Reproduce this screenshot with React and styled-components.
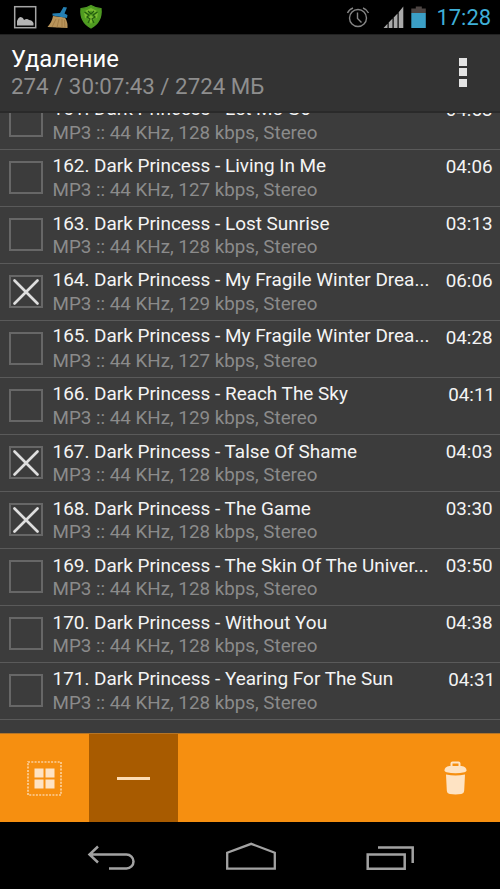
import React from 'react';
import styled, { createGlobalStyle } from 'styled-components';

const GlobalStyle = createGlobalStyle`
    * {
        box-sizing: border-box;
    }
    body {
        margin: 0;
        background: #000;
        font-family: Roboto, "Liberation Sans", sans-serif;
    }
`;

const Screen = styled.div`
    display: flex;
    flex-direction: column;
    width: 500px;
    height: 889px;
    overflow: hidden;
    background: #3c3c3c;
`;
const StatusBar = styled.div`
    display: flex;
    justify-content: space-between;
    flex: none;
    height: 34px;
    padding: 0 9px 0 13px;
    background: #000;
`;
const StatusGroup = styled.div`
    display: flex;
    align-items: flex-start;
`;
const Clock = styled.span`
    margin-left: 10px;
    color: #3fb0d8;
    font-size: 21.9px;
    line-height: 36px;
`;
const Header = styled.header`
    display: flex;
    justify-content: space-between;
    flex: none;
    height: 79px;
    padding: 10px 33px 0 11px;
    border-top: 1px solid #222;
    border-bottom: 2px solid #2a2a2a;
    background: #333;
`;
const HeaderTitle = styled.div`
    color: #fff;
    font-size: 23.8px;
    line-height: 28px;
`;
const HeaderInfo = styled.div`
    color: #8e8e8e;
    font-size: 22.3px;
    line-height: 27px;
`;
const MenuButton = styled.div`
    display: grid;
    gap: 2.5px;
    align-content: start;
    padding-top: 12.5px;
`;
const MenuDot = styled.span`
    width: 8px;
    height: 8px;
    background: #e3e3e3;
`;
const List = styled.div`
    display: flex;
    flex-direction: column;
    justify-content: flex-end;
    flex: 1;
    min-height: 0;
    padding-bottom: 13px;
    overflow: hidden;
`;
const Row = styled.div`
    display: grid;
    grid-template-columns: 34px 380px 1fr;
    column-gap: 9.5px;
    flex: none;
    height: 57px;
    padding: 4px 7.5px 0 9px;
    border-bottom: 1px solid #5a5a5a;
`;
const CheckBox = styled.span`
    display: flex;
    align-items: center;
    justify-content: center;
    height: 33px;
    margin-top: 7px;
    border: 2px solid #676767;
`;
const TrackTitle = styled.div`
    margin: ${props => props.$shift}px 0 ${props => -props.$shift}px;
    color: #f4f4f4;
    font-size: 18.93px;
    line-height: 24px;
    white-space: nowrap;
`;
const TrackInfo = styled.div`
    color: #8b8b8b;
    font-size: 18.8px;
    line-height: 24px;
    white-space: nowrap;
`;
const Duration = styled.div`
    margin-right: ${props => (props.$tight ? '-2.5px' : 0)};
    color: #f4f4f4;
    font-size: 18.8px;
    line-height: 26px;
    text-align: right;
`;
const Toolbar = styled.div`
    display: flex;
    flex: none;
    height: 89px;
    border-top: 1px solid #b47528;
    background: #f68f10;
`;
const ToolButton = styled.div`
    display: flex;
    align-items: center;
    justify-content: center;
    width: 89px;
    margin-left: ${props => (props.$last ? 'auto' : 0)};
    background: ${props => (props.$active ? '#a85b00' : 'transparent')};
`;
const Minus = styled.span`
    width: 33px;
    height: 3px;
    background: #fddcb4;
`;
const NavBar = styled.nav`
    display: flex;
    justify-content: space-between;
    flex: none;
    height: 67px;
    padding: 20px 83px 0 85px;
    background: #000;
`;

const tracks = [
    { title: '161. Dark Princess - Let Me Go', rate: 128, time: '04:53', shift: 0 },
    { title: '162. Dark Princess - Living In Me', rate: 127, time: '04:06', shift: 0 },
    { title: '163. Dark Princess - Lost Sunrise', rate: 128, time: '03:13', shift: 1 },
    { title: '164. Dark Princess - My Fragile Winter Drea...', rate: 129, time: '06:06', shift: 0, checked: true },
    { title: '165. Dark Princess - My Fragile Winter Drea...', rate: 127, time: '04:28', shift: -1 },
    { title: '166. Dark Princess - Reach The Sky', rate: 129, time: '04:11', shift: 0 },
    { title: '167. Dark Princess - Talse Of Shame', rate: 128, time: '04:03', shift: 1, checked: true },
    { title: '168. Dark Princess - The Game', rate: 128, time: '03:30', shift: 1, checked: true },
    { title: '169. Dark Princess - The Skin Of The Univer...', rate: 128, time: '03:50', shift: 1 },
    { title: '170. Dark Princess - Without You', rate: 128, time: '04:38', shift: 1 },
    { title: '171. Dark Princess - Yearing For The Sun', rate: 128, time: '04:31', shift: 0 },
];

const NotificationIcons = () => (
    <svg width="92" height="34" viewBox="13 0 92 34">
        <rect x="14.7" y="6.700" width="21" height="21" fill="none" stroke="#a5a5a5" strokeWidth="1.5" />
        <path d="M17 25.500v-4.500q1-3 3-4 3 0 4 3 3-2 5 0 3 0 4.500 3v2.500z" fill="#b5b5b5" />
        <path d="M53 16l12 1.500q3 5 2.500 10.500L47.500 27q4.500-5 5.500-11z" fill="#b9945a" />
        <path d="M56 19l-4 8M59 19l-2 8.500M62 19v9M64.500 20l.5 8" stroke="#9c7640" strokeWidth=".8" />
        <path d="M52.500 13.500l7.500-.5 3.500-6 3.500.5-2.500 6 3 1.500-.5 3-14.500-2.500z" fill="#257fb2" />
        <path d="M91 5.500q5 3 10 3 1.500 13-10 19.500Q79.500 21.500 81 8.500q5.500 0 10-3z" fill="#509d20" stroke="#4f9a24" strokeWidth="1.200" />
        <path d="M91 8l-6 3 3 2 3-2.500 3 2.500 3-2zM84 12l4 4-3 2.500zM98 12l-4 4 3 2.500zM91 15l3 3-3 6-3-6z" fill="#79bb31" />
        <path d="M84.500 12l4.500 3-2 2 3 2-2 4M97.500 12l-4.500 3 2 2-3 2 2 4M88 11l3 3 3-3" fill="none" stroke="#245a10" strokeWidth="1.100" />
    </svg>
);

const DeviceIcons = () => (
    <svg width="80" height="34" viewBox="347 0 80 34">
        <g fill="none" stroke="#858585" strokeWidth="1.400">
            <circle cx="359" cy="18" r="8.500" />
            <path d="M358.500 12.500v6l4 4M348.500 13q1.500-3.500 5.500-5M369.500 13q-1.500-3.500-5.500-5" />
        </g>
        <path
            d="M384.500 28l4-4.200V28zM389.700 22.500l3.800-4V28h-3.800zM394.700 17.500l3.800-4V28h-3.800zM399.700 12.200l4.600-5.700V28h-4.600z"
            fill="#a9a9a9"
        />
        <path d="M412.300 8.500h4.500v-2h6v2h4V13h-14.500z" fill="#4d4543" />
        <path d="M412.300 13h14.500v15h-14.500z" fill="#3b9fc6" />
    </svg>
);

const Cross = () => (
    <svg width="30" height="30" viewBox="0 0 30 30">
        <path d="M3.500 3.500l23 23M26.500 3.500l-23 23" stroke="#dedede" strokeWidth="2.700" strokeLinecap="round" />
    </svg>
);

const SelectAllIcon = () => (
    <svg width="35" height="35" viewBox="0 0 35 35">
        <rect x="1" y="1" width="33" height="33" fill="none" stroke="#fcd09a" strokeWidth="1.700" strokeDasharray="2 1.300" />
        <path d="M7.500 7.500h9v9h-9zM18.500 7.500h9v9h-9zM7.500 18.500h9v9h-9zM18.500 18.500h9v9h-9z" fill="#fee3c3" />
    </svg>
);

const TrashIcon = () => (
    <svg width="24" height="34" viewBox="0 0 24 34">
        <path d="M7.500 6V2.500q0-1 1-1h6q1 0 1 1V6" fill="none" stroke="#fee3c3" strokeWidth="2" />
        <path d="M.5 9.500q0-4 5-4.500h12q5 .5 5 4.500 0 1-2 1.700-9 2-18 0-2-.7-2-1.700z" fill="#fee3c3" />
        <path d="M2 13.500q9.500 1.800 19 0l-.8 16q-.2 3-3 3.500-5.700.8-11.400 0-2.800-.5-3-3.500z" fill="#fee3c3" />
    </svg>
);

const BackIcon = () => (
    <svg width="54" height="34" viewBox="85 842 54 34">
        <path d="M98 846.500l-8.500 8 8.500 8M90 854.500h36.500a6.700 6.700 0 0 1 0 14h-17.500" fill="none" stroke="#a2a2a2" strokeWidth="2.500" />
    </svg>
);

const HomeIcon = () => (
    <svg width="54" height="34" viewBox="223 842 54 34">
        <path d="M226.200 868.700v-16l24-8.900 23.600 8.900v16z" fill="none" stroke="#a2a2a2" strokeWidth="2.300" />
    </svg>
);

const RecentIcon = () => (
    <svg width="54" height="34" viewBox="363 842 54 34">
        <path d="M367.700 854.500h37v14.300h-37zM378 847.500h34.700v15.500" fill="none" stroke="#a2a2a2" strokeWidth="2.500" />
    </svg>
);

const Track = ({ track }) => (
    <Row>
        <CheckBox>{track.checked && <Cross />}</CheckBox>
        <div>
            <TrackTitle $shift={track.shift}>{track.title}</TrackTitle>
            <TrackInfo>MP3 :: 44 KHz, {track.rate} kbps, Stereo</TrackInfo>
        </div>
        <Duration $tight={track.time.endsWith('1')}>{track.time}</Duration>
    </Row>
);

export default class App extends React.Component {
    render() {
        return (
            <Screen>
                <GlobalStyle />
                <StatusBar>
                    <NotificationIcons />
                    <StatusGroup>
                        <DeviceIcons />
                        <Clock>17:28</Clock>
                    </StatusGroup>
                </StatusBar>
                <Header>
                    <div>
                        <HeaderTitle>Удаление</HeaderTitle>
                        <HeaderInfo>274 / 30:07:43 / 2724 МБ</HeaderInfo>
                    </div>
                    <MenuButton>
                        <MenuDot />
                        <MenuDot />
                        <MenuDot />
                    </MenuButton>
                </Header>
                <List>
                    {tracks.map(track => (
                        <Track key={track.title} track={track} />
                    ))}
                </List>
                <Toolbar>
                    <ToolButton>
                        <SelectAllIcon />
                    </ToolButton>
                    <ToolButton $active>
                        <Minus />
                    </ToolButton>
                    <ToolButton $last>
                        <TrashIcon />
                    </ToolButton>
                </Toolbar>
                <NavBar>
                    <BackIcon />
                    <HomeIcon />
                    <RecentIcon />
                </NavBar>
            </Screen>
        );
    }
}
